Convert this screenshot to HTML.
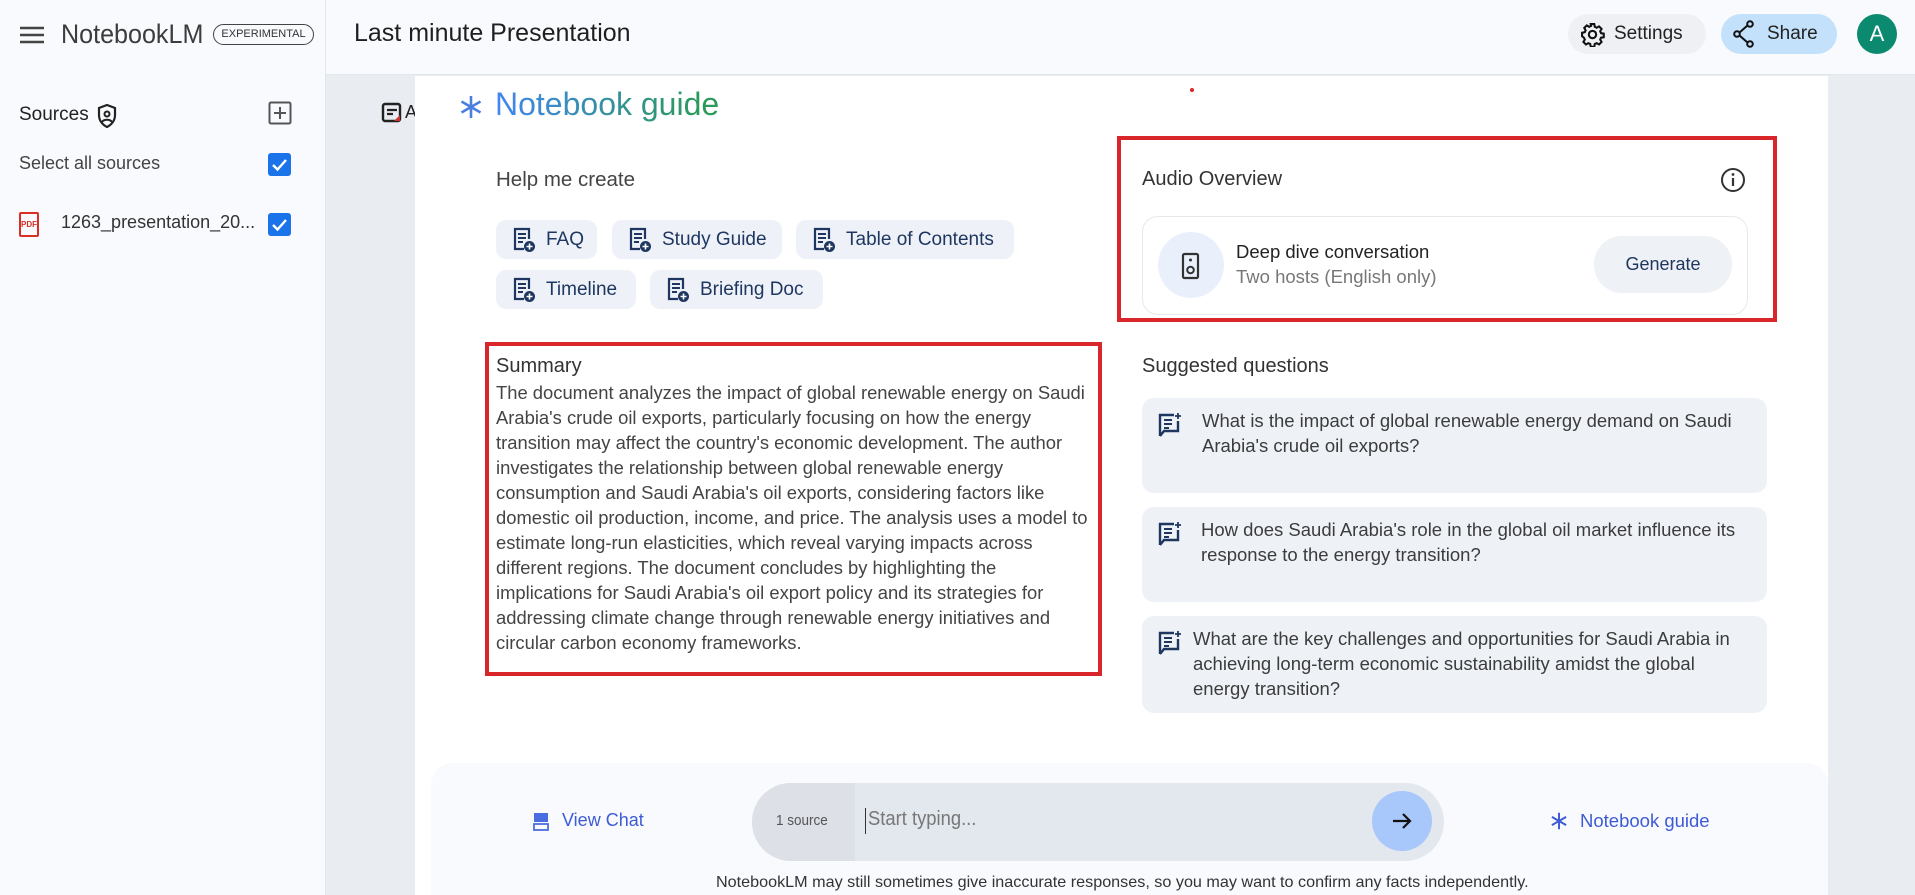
<!DOCTYPE html>
<html><head><meta charset="utf-8"><style>
*{box-sizing:border-box;margin:0;padding:0}
body{width:1915px;height:895px;overflow:hidden;background:#e9ecf1;font-family:"Liberation Sans",sans-serif;color:#1f1f1f;position:relative}
.abs{position:absolute}
.n{display:inline-block;transform-origin:left center;white-space:nowrap}
.side{left:0;top:0;width:326px;height:895px;background:#f8fafd;border-right:1px solid #e3e6ea}
.head{left:326px;top:0;width:1589px;height:75px;background:#f8fafd;border-bottom:1px solid #e3e6ea}
.chip{position:absolute;height:39px;background:#eef2f8;border-radius:10px;color:#1f3760;font-size:19px;display:flex;align-items:center;padding-left:16px}
.chip svg{margin-right:10px}
.red{position:absolute;border:4px solid #d9262b}
.q{position:absolute;left:1142px;width:625px;background:#eef2f7;border-radius:12px;font-size:18.5px;line-height:25px;color:#3c3c3c}
.q svg{position:absolute;left:16px;top:14px}
.q .t{position:absolute;top:10px}
</style></head><body>
<div class="abs side"></div>
<div class="abs head"></div>
<svg class="abs" style="left:19px;top:25px" width="26" height="20" viewBox="0 0 26 20"><path d="M1 3h24M1 10h24M1 17h24" stroke="#444" stroke-width="2.6"/></svg>
<div class="abs" style="left:61px;top:19px;font-size:27px;color:#3c3c3c"><span class="n" style="transform:scaleX(.93)">NotebookLM</span></div>
<div class="abs" style="left:213px;top:24px;width:101px;height:21px;border:1.5px solid #444;border-radius:11px;font-size:11px;color:#333;text-align:center;line-height:18px">EXPERIMENTAL</div>
<div class="abs" style="left:19px;top:104px;font-size:19px;color:#222">Sources</div>
<svg class="abs" style="left:97px;top:104px" width="20" height="24" viewBox="0 0 20 24"><path d="M10 1L2 4v7c0 6 4 10 8 12 4-2 8-6 8-12V4z" fill="none" stroke="#222" stroke-width="2.2"/><circle cx="10" cy="10" r="2.5" fill="none" stroke="#222" stroke-width="2"/><path d="M5 18c2-3 8-3 10 0" stroke="#222" stroke-width="2" fill="none"/></svg>
<svg class="abs" style="left:268px;top:101px" width="24" height="24" viewBox="0 0 24 24"><rect x="1.5" y="1.5" width="21" height="21" rx="1.5" fill="none" stroke="#555" stroke-width="2"/><path d="M12 6v12M6 12h12" stroke="#555" stroke-width="2"/></svg>
<div class="abs" style="left:19px;top:153px;font-size:18px;color:#444">Select all sources</div>
<div class="abs" style="left:268px;top:153px;width:23px;height:23px;background:#1a73e8;border-radius:3px"></div>
<svg class="abs" style="left:268px;top:153px" width="23" height="23"><path d="M5 12l4.5 4.5L18 7" stroke="#fff" stroke-width="2.4" fill="none"/></svg>
<div class="abs" style="left:19px;top:212px;width:20px;height:25px;border:2px solid #d93025;border-radius:2px;font-size:8px;color:#d93025;font-weight:bold;line-height:21px;text-align:center">PDF</div>
<div class="abs" style="left:61px;top:212px;font-size:18px;color:#333">1263_presentation_20...</div>
<div class="abs" style="left:268px;top:213px;width:23px;height:23px;background:#1a73e8;border-radius:3px"></div>
<svg class="abs" style="left:268px;top:213px" width="23" height="23"><path d="M5 12l4.5 4.5L18 7" stroke="#fff" stroke-width="2.4" fill="none"/></svg>
<div class="abs" style="left:354px;top:19px;font-size:25px;color:#1f1f1f">Last minute Presentation</div>
<div class="abs" style="left:1568px;top:14px;width:138px;height:40px;background:#eef0f3;border-radius:20px"></div>
<svg class="abs" style="left:1580px;top:22px" width="25" height="25" viewBox="0 0 24 24"><path d="M12 8.5a3.5 3.5 0 1 0 0 7 3.5 3.5 0 0 0 0-7z" fill="none" stroke="#111" stroke-width="2"/><path d="M10.3 2h3.4l.5 2.6 1.8.9 2.3-1.3 2.4 2.4-1.3 2.3.8 1.8 2.6.5v3.4l-2.6.5-.8 1.8 1.3 2.3-2.4 2.4-2.3-1.3-1.8.8-.5 2.7h-3.4l-.5-2.7-1.8-.8-2.3 1.3-2.4-2.4 1.3-2.3-.8-1.8L2 13.7v-3.4l2.6-.5.8-1.8-1.3-2.3 2.4-2.4 2.3 1.3 1.8-.9z" fill="none" stroke="#111" stroke-width="2"/></svg>
<div class="abs" style="left:1614px;top:23px;font-size:19px;color:#222">Settings</div>
<div class="abs" style="left:1721px;top:14px;width:116px;height:40px;background:#c3e1fb;border-radius:20px"></div>
<svg class="abs" style="left:1733px;top:20px" width="22" height="28" viewBox="0 0 22 28"><circle cx="17" cy="4" r="2.8" fill="none" stroke="#111" stroke-width="2"/><circle cx="4" cy="14" r="2.8" fill="none" stroke="#111" stroke-width="2"/><circle cx="17" cy="24" r="2.8" fill="none" stroke="#111" stroke-width="2"/><path d="M6.5 12.5l8-7M6.5 15.5l8 7" stroke="#111" stroke-width="2"/></svg>
<div class="abs" style="left:1767px;top:23px;font-size:19px;color:#222">Share</div>
<div class="abs" style="left:1857px;top:14px;width:40px;height:40px;border-radius:50%;background:#0b8a6f;color:#fff;font-size:22px;text-align:center;line-height:40px">A</div>
<div class="abs" style="left:415px;top:76px;width:1413px;height:819px;background:#fff"></div>
<svg class="abs" style="left:381px;top:102px" width="22" height="22" viewBox="0 0 22 22"><rect x="2" y="2" width="17" height="17" rx="2" fill="none" stroke="#222" stroke-width="2.4"/><path d="M6 8h10M6 12h6" stroke="#222" stroke-width="2.2"/><path d="M13 19l6-6v6z" fill="#c33"/></svg>
<div class="abs" style="left:405px;top:102px;font-size:18px;width:10px;overflow:hidden">A</div>
<div class="abs" style="left:1190px;top:88px;width:4px;height:4px;border-radius:50%;background:#d9262b"></div>
<svg class="abs" style="left:459px;top:95px" width="24" height="24" viewBox="0 0 24 24"><path d="M12 1v22M2.5 6.5l19 11M2.5 17.5l19-11" stroke="#4a7fe0" stroke-width="2.6"/></svg>
<div class="abs" style="left:495px;top:86px;font-size:32px;background:linear-gradient(90deg,#4285f4,#2a9a5b 90%);-webkit-background-clip:text;background-clip:text;color:transparent">Notebook guide</div>
<div class="abs" style="left:496px;top:168px;font-size:20.5px;color:#444">Help me create</div>
<div class="chip" style="left:496px;top:220px;width:101px"><svg width="24" height="26" viewBox="0 0 24 26"><path d="M12 22H3V2h14v10" fill="none" stroke="#1f3760" stroke-width="2.2"/><path d="M6 7h8M6 11h8M6 15h5" stroke="#1f3760" stroke-width="2"/><circle cx="17.5" cy="19.5" r="5.5" fill="#1f3760"/><path d="M17.5 16.5v6M14.5 19.5h6" stroke="#fff" stroke-width="1.6"/></svg>FAQ</div>
<div class="chip" style="left:612px;top:220px;width:170px"><svg width="24" height="26" viewBox="0 0 24 26"><path d="M12 22H3V2h14v10" fill="none" stroke="#1f3760" stroke-width="2.2"/><path d="M6 7h8M6 11h8M6 15h5" stroke="#1f3760" stroke-width="2"/><circle cx="17.5" cy="19.5" r="5.5" fill="#1f3760"/><path d="M17.5 16.5v6M14.5 19.5h6" stroke="#fff" stroke-width="1.6"/></svg>Study Guide</div>
<div class="chip" style="left:796px;top:220px;width:218px"><svg width="24" height="26" viewBox="0 0 24 26"><path d="M12 22H3V2h14v10" fill="none" stroke="#1f3760" stroke-width="2.2"/><path d="M6 7h8M6 11h8M6 15h5" stroke="#1f3760" stroke-width="2"/><circle cx="17.5" cy="19.5" r="5.5" fill="#1f3760"/><path d="M17.5 16.5v6M14.5 19.5h6" stroke="#fff" stroke-width="1.6"/></svg>Table of Contents</div>
<div class="chip" style="left:496px;top:270px;width:140px"><svg width="24" height="26" viewBox="0 0 24 26"><path d="M12 22H3V2h14v10" fill="none" stroke="#1f3760" stroke-width="2.2"/><path d="M6 7h8M6 11h8M6 15h5" stroke="#1f3760" stroke-width="2"/><circle cx="17.5" cy="19.5" r="5.5" fill="#1f3760"/><path d="M17.5 16.5v6M14.5 19.5h6" stroke="#fff" stroke-width="1.6"/></svg>Timeline</div>
<div class="chip" style="left:650px;top:270px;width:173px"><svg width="24" height="26" viewBox="0 0 24 26"><path d="M12 22H3V2h14v10" fill="none" stroke="#1f3760" stroke-width="2.2"/><path d="M6 7h8M6 11h8M6 15h5" stroke="#1f3760" stroke-width="2"/><circle cx="17.5" cy="19.5" r="5.5" fill="#1f3760"/><path d="M17.5 16.5v6M14.5 19.5h6" stroke="#fff" stroke-width="1.6"/></svg>Briefing Doc</div>
<div class="red" style="left:485px;top:342px;width:617px;height:334px"></div>
<div class="abs" style="left:496px;top:355px;font-size:20px;color:#333">Summary</div>
<div class="abs" style="left:496px;top:380px;font-size:18.4px;line-height:25px;color:#444"><span class="n">The document analyzes the impact of global renewable energy on Saudi<br>Arabia's crude oil exports, particularly focusing on how the energy<br>transition may affect the country's economic development. The author<br>investigates the relationship between global renewable energy<br>consumption and Saudi Arabia's oil exports, considering factors like<br>domestic oil production, income, and price. The analysis uses a model to<br>estimate long-run elasticities, which reveal varying impacts across<br>different regions. The document concludes by highlighting the<br>implications for Saudi Arabia's oil export policy and its strategies for<br>addressing climate change through renewable energy initiatives and<br>circular carbon economy frameworks.</span></div>
<div class="red" style="left:1117px;top:136px;width:660px;height:186px"></div>
<div class="abs" style="left:1142px;top:168px;font-size:20px;color:#333">Audio Overview</div>
<svg class="abs" style="left:1720px;top:167px" width="26" height="26" viewBox="0 0 26 26"><circle cx="13" cy="13" r="11" fill="none" stroke="#333" stroke-width="2"/><path d="M13 11v8" stroke="#333" stroke-width="2.2"/><circle cx="13" cy="7.5" r="1.4" fill="#333"/></svg>
<div class="abs" style="left:1142px;top:216px;width:606px;height:99px;border:1px solid #e6e8ec;border-radius:16px"></div>
<div class="abs" style="left:1158px;top:232px;width:66px;height:66px;border-radius:50%;background:#eaf0fb"></div>
<svg class="abs" style="left:1180px;top:252px" width="22" height="28" viewBox="0 0 22 28"><rect x="3" y="2" width="15" height="24" rx="1.5" fill="none" stroke="#333" stroke-width="2.2"/><circle cx="10.5" cy="18" r="3.3" fill="none" stroke="#333" stroke-width="2"/><circle cx="10.5" cy="8" r="1.5" fill="#333"/></svg>
<div class="abs" style="left:1236px;top:241px;font-size:18.5px;color:#222">Deep dive conversation</div>
<div class="abs" style="left:1236px;top:266px;font-size:18.5px;color:#777">Two hosts (English only)</div>
<div class="abs" style="left:1594px;top:236px;width:138px;height:57px;border-radius:28px;background:#eef1f5;color:#1f3760;font-size:18px;text-align:center;line-height:57px">Generate</div>
<div class="abs" style="left:1142px;top:355px;font-size:20px;color:#333">Suggested questions</div>
<div class="q" style="top:398px;height:95px"><svg width="24" height="26" viewBox="0 0 24 26"><path d="M2 24V3h14M20 9v10H6L2 24" fill="none" stroke="#1f3760" stroke-width="2.4"/><path d="M6 8h8M6 12h8M6 16h5" stroke="#1f3760" stroke-width="2"/><path d="M20 1v6M17 4h6" stroke="#1f3760" stroke-width="1.8"/></svg><div class="t" style="left:60px"><span class="n">What is the impact of global renewable energy demand on Saudi<br>Arabia's crude oil exports?</span></div></div>
<div class="q" style="top:507px;height:95px"><svg width="24" height="26" viewBox="0 0 24 26"><path d="M2 24V3h14M20 9v10H6L2 24" fill="none" stroke="#1f3760" stroke-width="2.4"/><path d="M6 8h8M6 12h8M6 16h5" stroke="#1f3760" stroke-width="2"/><path d="M20 1v6M17 4h6" stroke="#1f3760" stroke-width="1.8"/></svg><div class="t" style="left:59px"><span class="n">How does Saudi Arabia's role in the global oil market influence its<br>response to the energy transition?</span></div></div>
<div class="q" style="top:616px;height:97px"><svg width="24" height="26" viewBox="0 0 24 26"><path d="M2 24V3h14M20 9v10H6L2 24" fill="none" stroke="#1f3760" stroke-width="2.4"/><path d="M6 8h8M6 12h8M6 16h5" stroke="#1f3760" stroke-width="2"/><path d="M20 1v6M17 4h6" stroke="#1f3760" stroke-width="1.8"/></svg><div class="t" style="left:51px"><span class="n">What are the key challenges and opportunities for Saudi Arabia in<br>achieving long-term economic sustainability amidst the global<br>energy transition?</span></div></div>
<div class="abs" style="left:431px;top:763px;width:1397px;height:132px;background:#f8fafd;border-radius:22px 22px 0 0"></div>
<svg class="abs" style="left:533px;top:812px" width="16" height="19" viewBox="0 0 16 19"><rect x="1" y="1" width="14" height="9" fill="#4a6ee0"/><rect x="1" y="12" width="14" height="6" fill="none" stroke="#4a6ee0" stroke-width="1.8"/></svg>
<div class="abs" style="left:562px;top:810px;font-size:18px;color:#3d5bd6">View Chat</div>
<div class="abs" style="left:752px;top:783px;width:692px;height:78px;border-radius:39px;background:#e3e7ee;overflow:hidden"><div style="position:absolute;left:0;top:0;width:103px;height:78px;background:#dde1e7"></div></div>
<div class="abs" style="left:776px;top:812px;font-size:15px;color:#555"><span class="n" style="transform:scaleX(.9)">1 source</span></div>
<div class="abs" style="left:865px;top:808px;width:1px;height:26px;background:#333"></div>
<div class="abs" style="left:868px;top:808px;font-size:20px;color:#777"><span class="n" style="transform:scaleX(.92)">Start typing...</span></div>
<div class="abs" style="left:1372px;top:791px;width:60px;height:60px;border-radius:50%;background:#a8c7fa"></div>
<svg class="abs" style="left:1391px;top:810px" width="22" height="22" viewBox="0 0 22 22"><path d="M2 11h17M12 4l7 7-7 7" stroke="#111" stroke-width="2.2" fill="none"/></svg>
<svg class="abs" style="left:1550px;top:812px" width="18" height="18" viewBox="0 0 24 24"><path d="M12 1v22M2.5 6.5l19 11M2.5 17.5l19-11" stroke="#3d5bd6" stroke-width="2.6"/></svg>
<div class="abs" style="left:1580px;top:810px;font-size:18.5px;color:#3d5bd6">Notebook guide</div>
<div class="abs" style="left:716px;top:874px;font-size:16px;color:#333"><span class="n" style="transform:scaleX(1.01)">NotebookLM may still sometimes give inaccurate responses, so you may want to confirm any facts independently.</span></div>
</body></html>
